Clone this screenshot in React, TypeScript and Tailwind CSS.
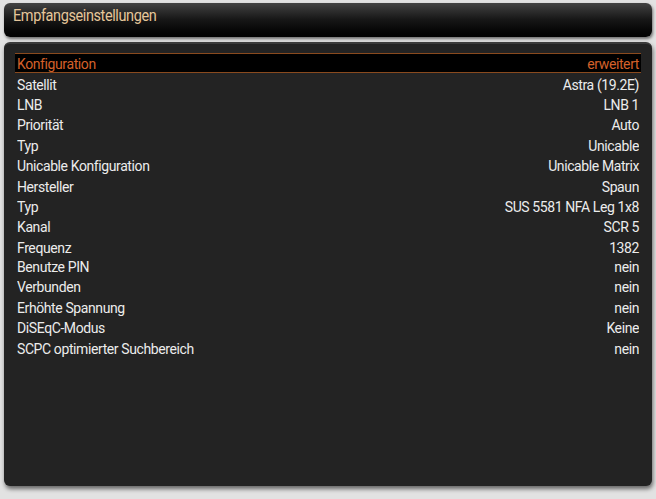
import React from "react";

const rows: [string, string][] = [
  ["Konfiguration", "erweitert"],
  ["Satellit", "Astra (19.2E)"],
  ["LNB", "LNB 1"],
  ["Priorität", "Auto"],
  ["Typ", "Unicable"],
  ["Unicable Konfiguration", "Unicable Matrix"],
  ["Hersteller", "Spaun"],
  ["Typ", "SUS 5581 NFA Leg 1x8"],
  ["Kanal", "SCR 5"],
  ["Frequenz", "1382"],
  ["Benutze PIN", "nein"],
  ["Verbunden", "nein"],
  ["Erhöhte Spannung", "nein"],
  ["DiSEqC-Modus", "Keine"],
  ["SCPC optimierter Suchbereich", "nein"],
];

export default function App() {
  return (
    <div
      className="w-[656px] h-[499px] bg-[#e2e2e2] flex flex-col px-[4px] pt-[3px] pb-[13px] gap-[5px]"
      style={{ fontFamily: "Roboto, 'Liberation Sans', sans-serif" }}
    >
      <div className="h-[34px] shrink-0 rounded-[6px] bg-gradient-to-b from-[#444444] via-[#161616] to-[#020202] shadow-[1px_2px_3px_rgba(0,0,0,0.5)] flex items-center pl-[9px] pb-[7px]">
        <span className="text-[14.5px] text-[#e6c69a] tracking-[-0.4px] inline-block scale-y-[1.08]">Empfangseinstellungen</span>
      </div>
      <div className="flex-1 rounded-[6px] bg-[#232323] border-t-[2px] border-[#3a3a3a] shadow-[1px_3px_4px_rgba(0,0,0,0.55)] pt-[9px] px-[11px]">
        {rows.map(([k, v], i) => (
          <div
            key={i}
            className={
              i === 0
                ? "h-[20.4px] flex items-center justify-between px-[2px] bg-black border-y border-[#8a4a1e] text-[#d4612a] text-[14px] leading-none tracking-[-0.4px]"
                : "h-[20.4px] flex items-center justify-between px-[2px] text-[#ececec] text-[14px] leading-none tracking-[-0.4px]"
            }
          >
            <span className="inline-block scale-y-[1.1] origin-center">{k}</span>
            <span className="inline-block scale-y-[1.1] origin-center">{v}</span>
          </div>
        ))}
      </div>
    </div>
  );
}
